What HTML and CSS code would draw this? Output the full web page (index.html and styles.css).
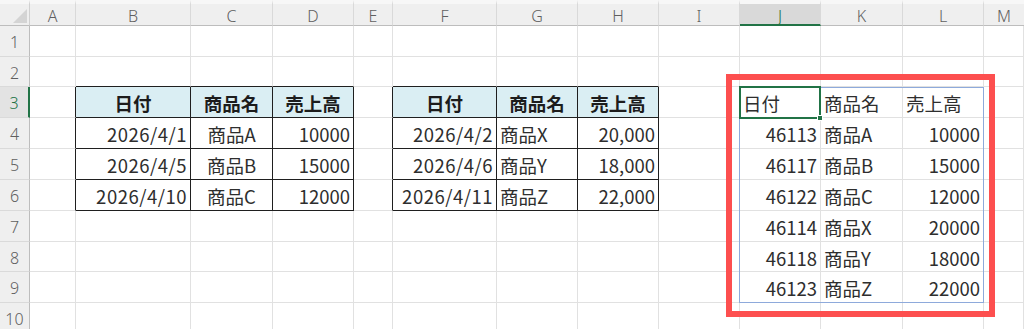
FILE: index.html
```html
<!DOCTYPE html>
<html lang="ja">
<head>
<meta charset="utf-8">
<title>売上データ</title>
<link rel="stylesheet" href="styles.css">
</head>
<body>
<div class="sheet">
  <!-- column headers -->
  <div class="corner"><svg width="30" height="26" viewBox="0 0 30 26"><polygon points="27,9 27,23 13,23" fill="#d4d4d4"/></svg></div>
  <div class="ch">A</div><div class="ch">B</div><div class="ch">C</div><div class="ch">D</div><div class="ch">E</div><div class="ch">F</div><div class="ch">G</div><div class="ch">H</div><div class="ch">I</div><div class="ch sel">J</div><div class="ch">K</div><div class="ch">L</div><div class="ch last">M</div>

  <!-- row 1 -->
  <div class="rh">1</div>
  <div class="c"></div><div class="c"></div><div class="c"></div><div class="c"></div><div class="c"></div><div class="c"></div><div class="c"></div><div class="c"></div><div class="c"></div><div class="c"></div><div class="c"></div><div class="c"></div><div class="c"></div>

  <!-- row 2 -->
  <div class="rh">2</div>
  <div class="c"></div><div class="c eb"></div><div class="c eb"></div><div class="c eb"></div><div class="c"></div><div class="c eb"></div><div class="c eb"></div><div class="c eb"></div><div class="c"></div><div class="c"></div><div class="c"></div><div class="c"></div><div class="c"></div>

  <!-- row 3 -->
  <div class="rh sel">3</div>
  <div class="c er"></div>
  <div class="c th">日付</div><div class="c th">商品名</div><div class="c th">売上高</div>
  <div class="c er"></div>
  <div class="c th">日付</div><div class="c th">商品名</div><div class="c th">売上高</div>
  <div class="c"></div>
  <div class="c">日付</div><div class="c">商品名</div><div class="c">売上高</div>
  <div class="c"></div>

  <!-- row 4 -->
  <div class="rh">4</div>
  <div class="c er"></div>
  <div class="c tb r date">2026/4/1</div><div class="c tb m">商品A</div><div class="c tb r">10000</div>
  <div class="c er"></div>
  <div class="c tb r date">2026/4/2</div><div class="c tb">商品X</div><div class="c tb r">20,000</div>
  <div class="c"></div>
  <div class="c r">46113</div><div class="c">商品A</div><div class="c r">10000</div>
  <div class="c"></div>

  <!-- row 5 -->
  <div class="rh">5</div>
  <div class="c er"></div>
  <div class="c tb r date">2026/4/5</div><div class="c tb m">商品B</div><div class="c tb r">15000</div>
  <div class="c er"></div>
  <div class="c tb r date">2026/4/6</div><div class="c tb">商品Y</div><div class="c tb r">18,000</div>
  <div class="c"></div>
  <div class="c r">46117</div><div class="c">商品B</div><div class="c r">15000</div>
  <div class="c"></div>

  <!-- row 6 -->
  <div class="rh">6</div>
  <div class="c er"></div>
  <div class="c tb r date">2026/4/10</div><div class="c tb m">商品C</div><div class="c tb r">12000</div>
  <div class="c er"></div>
  <div class="c tb r date">2026/4/11</div><div class="c tb">商品Z</div><div class="c tb r">22,000</div>
  <div class="c"></div>
  <div class="c r">46122</div><div class="c">商品C</div><div class="c r">12000</div>
  <div class="c"></div>

  <!-- row 7 -->
  <div class="rh">7</div>
  <div class="c"></div><div class="c"></div><div class="c"></div><div class="c"></div><div class="c"></div><div class="c"></div><div class="c"></div><div class="c"></div><div class="c"></div>
  <div class="c r">46114</div><div class="c">商品X</div><div class="c r">20000</div>
  <div class="c"></div>

  <!-- row 8 -->
  <div class="rh">8</div>
  <div class="c"></div><div class="c"></div><div class="c"></div><div class="c"></div><div class="c"></div><div class="c"></div><div class="c"></div><div class="c"></div><div class="c"></div>
  <div class="c r">46118</div><div class="c">商品Y</div><div class="c r">18000</div>
  <div class="c"></div>

  <!-- row 9 -->
  <div class="rh">9</div>
  <div class="c"></div><div class="c"></div><div class="c"></div><div class="c"></div><div class="c"></div><div class="c"></div><div class="c"></div><div class="c"></div><div class="c"></div>
  <div class="c r">46123</div><div class="c">商品Z</div><div class="c r">22000</div>
  <div class="c"></div>

  <!-- row 10 -->
  <div class="rh">10</div>
  <div class="c"></div><div class="c"></div><div class="c"></div><div class="c"></div><div class="c"></div><div class="c"></div><div class="c"></div><div class="c"></div><div class="c"></div><div class="c"></div><div class="c"></div><div class="c"></div><div class="c"></div>

  <!-- overlays: used range outline, active cell, callout box -->
  <div class="range"></div>
  <div class="active"><span class="handle"></span></div>
  <div class="callout"></div>
</div>
</body>
</html>
```

FILE: styles.css
```css
* { box-sizing: border-box; }

html, body {
  margin: 0;
  padding: 0;
  background: #ffffff;
  overflow: hidden;
}

.sheet {
  position: relative;
  display: grid;
  grid-template-columns: 30px 46px 115px 82px 81px 39px 104px 81px 81px 81px 81px 82px 81px 1fr;
  grid-template-rows: 26px 31px 30px 31px 31px 31px 31px 31px 30px 31px 31px;
  width: 1024px;
  height: 329px;
  overflow: hidden;
  font-family: "Noto Sans CJK JP", "Noto Sans", sans-serif;
  color: #2e2e2e;
}

/* headers */
.corner {
  background: #efefef;
  border-top: 4px solid #f7f7f7;
  border-right: 1px solid #d0d0d0;
  border-bottom: 1px solid #bdbdbd;
}
.corner svg { display: block; margin-top: -4px; }

.ch {
  display: flex;
  align-items: center;
  justify-content: center;
  padding-top: 3px;
  background: #efefef;
  border-top: 4px solid #f7f7f7;
  border-right: 1px solid #d9d9d9;
  border-bottom: 1px solid #bdbdbd;
  font-family: "Noto Sans", "Noto Sans CJK JP", sans-serif;
  font-weight: 300;
  font-size: 16px;
  color: #5f5f5f;
}
.ch.sel {
  background: #d9d9d9;
  color: #217346;
  border-bottom: 2px solid #217346;
}
.ch.last { border-right: none; }

.rh {
  display: flex;
  align-items: center;
  justify-content: center;
  padding-top: 2px;
  background: #efefef;
  border-right: 1px solid #bdbdbd;
  border-bottom: 1px solid #dadada;
  font-family: "Noto Sans", "Noto Sans CJK JP", sans-serif;
  font-weight: 300;
  font-size: 16px;
  color: #5f5f5f;
}
.rh.sel {
  background: #e3e3e3;
  color: #217346;
  border-right: 2px solid #217346;
}

/* cells */
.c {
  display: flex;
  align-items: center;
  padding: 2px 3px 0;
  border-right: 1px solid #e1e1e1;
  border-bottom: 1px solid #e1e1e1;
  font-size: 18.5px;
  white-space: nowrap;
}
.r { justify-content: flex-end; }
.m { justify-content: center; }
.date { letter-spacing: 0.5px; }

.th {
  justify-content: center;
  background: #daeef3;
  font-weight: 700;
  color: #1c1c1c;
  border-right-color: #1f1f1f;
  border-bottom-color: #1f1f1f;
}
.tb {
  border-right-color: #1f1f1f;
  border-bottom-color: #1f1f1f;
}
.eb { border-bottom-color: #1f1f1f; }
.er { border-right-color: #1f1f1f; }

/* used range outline J3:L9, drawn over the cells of that area */
.range {
  position: absolute;
  grid-column: 11 / 14;
  grid-row: 4 / 11;
  top: 0;
  right: 0;
  bottom: 0;
  left: -1px;
  border: 1px solid #8eaadb;
  pointer-events: none;
}

/* active cell J3 */
.active {
  position: absolute;
  grid-column: 11 / 12;
  grid-row: 4 / 5;
  top: -1px;
  right: 0;
  bottom: -1px;
  left: -1px;
  border: 2px solid #217346;
  pointer-events: none;
}
.handle {
  position: absolute;
  right: -4px;
  bottom: -4px;
  width: 6px;
  height: 6px;
  background: #217346;
  border: 1px solid #ffffff;
}

/* red callout frame */
.callout {
  position: absolute;
  left: 726px;
  top: 74px;
  width: 269px;
  height: 243px;
  border: 6px solid #fd4f4f;
  pointer-events: none;
}
```
